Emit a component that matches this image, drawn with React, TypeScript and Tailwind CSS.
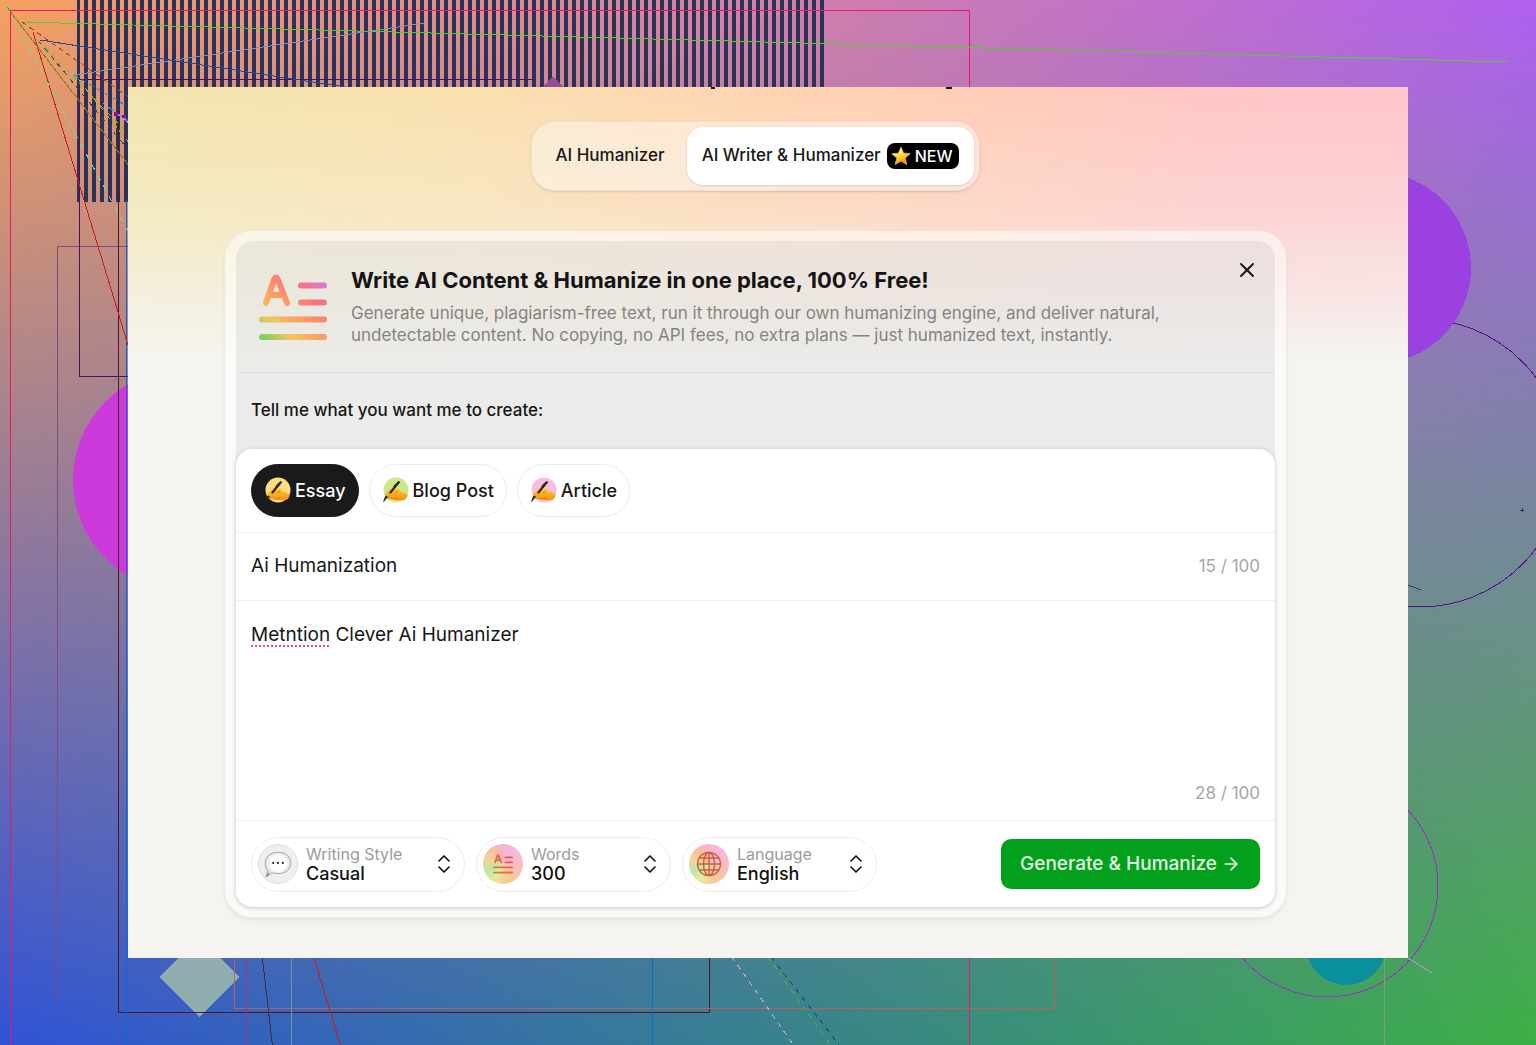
import { useId, useState } from "react";
import { ArrowRight, ChevronsUpDown, X } from "lucide-react";

const stripes = Array.from({ length: 93 }, (_, i) => 84 + i * 8);

function Backdrop() {
  return (
    <div aria-hidden="true" className="absolute inset-0 overflow-hidden">
      <div className="absolute inset-0 bg-[linear-gradient(to_right,#f5a25f,#b060f0)]" />
      <div className="absolute inset-0 bg-[linear-gradient(to_right,#3052d6,#3cb045)] [mask-image:linear-gradient(to_bottom,transparent,black)]" />
      <svg
        className="absolute inset-0 h-full w-full"
        viewBox="0 0 1536 1045"
        preserveAspectRatio="none"
        shapeRendering="crispEdges"
        fill="none"
      >
        <g fill="#2d3158">
          <rect x="77" y="0" width="3" height="202" />
          {stripes.map((x) => (
            <rect key={x} x={x} y="0" width="4" height="202" />
          ))}
        </g>
        <circle cx="184" cy="480" r="111" fill="#cd3adc" />
        <circle cx="1420" cy="463" r="144" stroke="#5c1090" />
        <circle cx="1375" cy="268" r="96" fill="#9b41e2" />
        <circle cx="1327" cy="886" r="111" stroke="#a02bc8" />
        <circle cx="1346" cy="945" r="40" fill="#0a8f9c" />
        <path d="M199 937L239 977L199 1017L159 977Z" fill="#90adb0" />
        <path d="M543 87L553 76L563 87Z" fill="#9a4a90" />
        <path d="M10.5 1045V10.5H969.5V1045" stroke="#ec1763" />
        <path d="M57.5 1000V246.5H130" stroke="#804c7c" />
        <path d="M130 376.5H79.5V79.5H533" stroke="#4b1055" />
        <path d="M118.5 110V1012.5H709.5V950" stroke="#501522" />
        <path d="M126.5 200V1045M652.5 950V1045" stroke="#0d68cb" />
        <path d="M234.5 950V1008.5H1054.5V950" stroke="#b0645f" />
        <path d="M246.5 950V1045" stroke="#9b3a6c" />
        <path d="M291.5 950V1045" stroke="#6a98a8" />
        <path d="M1384.5 950V1045" stroke="#72a582" />
        <path d="M22 22L1507 62" stroke="#54cc32" />
        <path d="M74 75L425 23" stroke="#8790b4" />
        <path d="M40 40L345 87" stroke="#24489b" />
        <path d="M33 32L348 1070" stroke="#d01818" />
        <path d="M6 6L130 167" stroke="#8b7a20" />
        <path d="M6 6L130 235" stroke="#67dfaa" strokeDasharray="6 6" />
        <path d="M22 22L130 98" stroke="#aa3544" strokeDasharray="5 4" />
        <path d="M38 40L130 152" stroke="#204b56" strokeDasharray="5 5" />
        <path d="M38 40L130 136" stroke="#71bf31" strokeDasharray="5 5" />
        <path d="M74 75L130 108" stroke="#2478d8" strokeDasharray="5 4" />
        <path d="M78 79L130 144" stroke="#aaad12" strokeDasharray="7 4" />
        <path d="M103 103L130 124" stroke="#df83e8" />
        <path d="M108 107L130 122" stroke="#22a2ef" />
        <rect x="114" y="112" width="4" height="4" fill="#940d9b" />
        <rect x="122" y="115" width="4" height="3" fill="#940d9b" />
        <path d="M262 955L273 1050" stroke="#3c3037" />
        <path d="M732 957L797 1050" stroke="#e0a5c6" strokeDasharray="5 5" />
        <path d="M768 957L834 1050" stroke="#54b635" strokeDasharray="5 5" />
        <path d="M771 957L843 1050" stroke="#184f60" strokeDasharray="5 5" />
        <path d="M1405 584L1421 590" stroke="#283e72" />
        <path d="M1408 958L1432 973" stroke="#c08be0" />
        <path d="M1520 510H1524M1522 508V512" stroke="#24402a" />
      </svg>
    </div>
  );
}

function WritingHand({ tint }: { tint: string }) {
  const id = useId();
  return (
    <svg aria-hidden="true" viewBox="0 0 27 27" className="size-[27px] shrink-0">
      <defs>
        <linearGradient id={id} x1="0" y1="0" x2="0" y2="1">
          <stop offset="0" stopColor="#ffd43a" />
          <stop offset="1" stopColor="#f3900f" />
        </linearGradient>
      </defs>
      <circle cx="14" cy="13" r="12.5" fill={tint} />
      <path
        d="M3.5 20C3 17.5 5 14.5 7.500 13C9 10.500 11 9 12.500 9.200C14 9.500 13 11.500 12 12.700C14 11.500 16 11 17.500 11.700C18.500 12.500 17.500 13.500 16 14.200C18.500 14.300 21 14.500 25.500 17.500C26 20 24 22 22.500 23C18 23.500 14 23.500 10.500 22C8 22.500 5 22 3.500 20Z"
        fill={`url(#${id})`}
      />
      <path d="M10.500 22C13 22 14.500 21.500 16 20.500M16 14.200L13.500 15.500" fill="none" stroke="#c9740f" strokeWidth="0.800" strokeLinecap="round" />
      <path d="M16.500 4.400L17.800 5.200L8.800 16.200L7.600 15.500ZM15.500 5.200L11.500 9.500" fill="#2b2423" stroke="#2b2423" strokeWidth="1" strokeLinejoin="round" />
      <path d="M5.500 19.800L1.700 24.600L2.600 21.500L3.800 19Z" fill="#2b2423" stroke="#2b2423" strokeWidth="0.800" strokeLinejoin="round" />
    </svg>
  );
}

function DocumentMark({ className, small = false }: { className: string; small?: boolean }) {
  const id = useId();
  return (
    <svg aria-hidden="true" viewBox="1 0 68 68" className={className}>
      <defs>
        <linearGradient id={id} gradientUnits="userSpaceOnUse" x1="4" y1="66" x2="62" y2="2">
          <stop offset="0" stopColor={small ? "#c08a35" : "#72d066"} />
          <stop offset="0.250" stopColor={small ? "#c98238" : "#f2c75c"} />
          <stop offset="0.500" stopColor={small ? "#dd6f42" : "#fd9b64"} />
          <stop offset="0.750" stopColor={small ? "#df5555" : "#fa7181"} />
          <stop offset="1" stopColor={small ? "#c75d77" : "#d47adf"} />
        </linearGradient>
      </defs>
      <g fill="none" stroke={`url(#${id})`} strokeWidth="6" strokeLinecap="round" strokeLinejoin="round">
        <path d="M8 29L16 6Q18 1 20 6L29 29M11 21H26" />
        <path d="M43 11.500L66 11.400M43 28.500L66 28.400M4 45.500L66 45.400M4 63L66 62.900" />
      </g>
    </svg>
  );
}

function SpeechBubble() {
  const id = useId();
  return (
    <svg aria-hidden="true" viewBox="0 0 30 30" className="size-8">
      <defs>
        <radialGradient id={id} cx="0.500" cy="0.450" r="0.600">
          <stop offset="0.500" stopColor="#ffffff" />
          <stop offset="0.850" stopColor="#dadada" />
          <stop offset="1" stopColor="#8c8c8c" />
        </radialGradient>
      </defs>
      <path d="M15 4C22 4 27 8 27 14C27 20 22 24 15 24C13 24 11 23.700 9.500 23.200C7.500 25 5.500 26.500 3.500 27C4.500 25 5.300 23 5 21C3.500 19 3 17 3 14C3 8 8 4 15 4Z" fill={`url(#${id})`} stroke="#9c9c9c" strokeWidth="0.800" />
      <g fill="#262626">
        <circle cx="10.500" cy="14" r="1" />
        <circle cx="15" cy="14" r="1" />
        <circle cx="19.500" cy="14" r="1" />
      </g>
    </svg>
  );
}

function GlobeMark() {
  return (
    <svg aria-hidden="true" viewBox="0 0 26 26" className="size-6.5" fill="none" stroke="#c8613c" strokeWidth="1.400">
      <circle cx="13" cy="13" r="11.500" />
      <ellipse cx="13" cy="13" rx="5.500" ry="11.500" />
      <path d="M13 1.500V24.500M1.500 13H24.500M3.500 7H22.500M3.500 19H22.500" />
    </svg>
  );
}

function Star() {
  const id = useId();
  return (
    <svg aria-hidden="true" viewBox="0 0 20 20" className="size-5">
      <defs>
        <linearGradient id={id} x1="0" y1="0" x2="0.400" y2="1">
          <stop offset="0.300" stopColor="#fff3a0" />
          <stop offset="0.650" stopColor="#ffcc33" />
          <stop offset="1" stopColor="#e98e0c" />
        </linearGradient>
      </defs>
      <path d="M10 1L12.600 7.200L19.200 7.700L14.200 12L15.800 18.600L10 15.100L4.200 18.600L5.800 12L0.800 7.700L7.400 7.200Z" fill={`url(#${id})`} stroke="#f4b42a" strokeWidth="0.800" strokeLinejoin="round" />
    </svg>
  );
}

const kinds = [
  { label: "Essay", tint: "#fddc83" },
  { label: "Blog Post", tint: "#cbe98b" },
  { label: "Article", tint: "#f6bddd" },
];

const rainbow =
  "bg-[conic-gradient(from_0deg,#f8b4cf,#fab5dc_12%,#fbc0b4_30%,#f8c899_45%,#e6e9a2_58%,#bde9a4_68%,#f5d29b_80%,#f8bc9c_90%,#f8b4cf)]";

function Picker({
  label,
  options,
  width,
  disc,
  children,
}: {
  label: string;
  options: string[];
  width: string;
  disc: string;
  children: React.ReactNode;
}) {
  return (
    <label className={`relative flex h-[55px] items-center gap-2 rounded-full border border-[#ececec] px-1.5 ${width}`}>
      <span className={`flex size-10 shrink-0 items-center justify-center rounded-full ${disc}`}>{children}</span>
      <span className="flex min-w-0 flex-1 flex-col">
        <span className="text-base leading-5 text-[#9c9c9c]">{label}</span>
        <select className="w-full appearance-none bg-transparent text-lg leading-5 font-medium text-[#111] outline-none">
          {options.map((o) => (
            <option key={o}>{o}</option>
          ))}
        </select>
      </span>
      <ChevronsUpDown aria-hidden="true" strokeWidth={1.75} className="pointer-events-none absolute right-2 size-6 text-[#171717]" />
    </label>
  );
}

export default function App() {
  const [kind, setKind] = useState("Essay");
  const [title, setTitle] = useState("Ai Humanization");
  return (
    <div className="relative flex min-h-screen flex-col px-32 py-[87px] font-['Inter',sans-serif] text-[#171717]">
      <Backdrop />
      <main className="relative flex flex-1 flex-col items-center overflow-hidden bg-[#f5f4f0] pr-[121px] pb-10 pl-24">
        <div
          aria-hidden="true"
          className="absolute inset-x-0 top-0 h-[270px] bg-[linear-gradient(to_right,#f2e6ae,#fadfae_28%,#fed6b0_45%,#ffcdb6_65%,#ffc5c5_85%,#ffc4cb)] [mask-image:linear-gradient(to_bottom,black,rgba(0,0,0,0.7)_45%,transparent)]"
        />
        <div aria-hidden="true" className="absolute inset-x-0 top-0 h-0.5">
          <span className="absolute left-[583px] h-0.5 w-1 bg-[#171717]" />
          <span className="absolute left-[818px] h-0.5 w-1.5 bg-[#171717]" />
        </div>

        <nav className="relative mt-[34px] flex rounded-3xl border border-black/5 bg-white/40 p-[5px] shadow-sm">
          <button type="button" className="px-[18px] text-[17px] font-medium">
            AI Humanizer
          </button>
          <button type="button" className="ml-1 flex h-[58px] items-center gap-1.5 rounded-2xl bg-white px-[15px] text-[17px] font-medium shadow-sm">
            AI Writer &amp; Humanizer
            <span className="flex h-[26px] items-center gap-1 rounded-lg bg-black px-1 pr-1.5 text-base font-medium text-white">
              <Star />
              NEW
            </span>
          </button>
        </nav>

        <section className="relative mt-[39px] w-full rounded-[28px] border border-black/5 bg-white/50 px-[11px] py-2.5 shadow-md shadow-black/5">
          <div className="-mb-4 rounded-t-[18px] bg-black/[0.06] pb-4">
            <header className="flex h-[132px] items-start border-b border-black/5 pt-[27px] pl-[23px]">
              <DocumentMark className="mt-1.5 w-[68px] shrink-0" />
              <div className="ml-6 flex-1">
                <h1 className="text-[22px] leading-6 font-bold text-[#141414]">
                  Write AI Content &amp; Humanize in one place, 100% Free!
                </h1>
                <p className="mt-2.5 max-w-[860px] text-[17px] leading-[22px] text-[#858381]">
                  Generate unique, plagiarism-free text, run it through our own humanizing engine, and deliver natural,
                  undetectable content. No copying, no API fees, no extra plans — just humanized text, instantly.
                </p>
              </div>
              <button type="button" aria-label="Close" className="mr-3 -mt-3.5 p-1">
                <X className="size-6" />
              </button>
            </header>
            <p className="flex h-[76px] items-center px-[15px] text-[17px] font-medium">Tell me what you want me to create:</p>
          </div>

          <div className="relative rounded-2xl bg-white shadow-[0_1px_4px_rgba(0,0,0,0.22)]">
            <div className="flex h-[84px] items-center gap-2.5 border-b border-[#eee] px-[15px]">
              {kinds.map((k) => (
                <button
                  key={k.label}
                  type="button"
                  onClick={() => setKind(k.label)}
                  className={`flex h-[53px] items-center gap-1 rounded-full border px-3 text-lg font-medium ${
                    kind === k.label ? "border-[#1a1a1a] bg-[#1a1a1a] text-white" : "border-[#ececec] bg-white"
                  }`}
                >
                  <WritingHand tint={k.tint} />
                  {k.label}
                </button>
              ))}
            </div>
            <div className="flex h-[68px] items-center border-b border-[#eee] px-[15px]">
              <input
                aria-label="Title"
                value={title}
                onChange={(e) => setTitle(e.target.value)}
                className="flex-1 bg-transparent text-[19px] outline-none"
              />
              <span className="text-[17px] text-[#a6a6a6]">15 / 100</span>
            </div>
            <div className="flex h-[220px] flex-col justify-between border-b border-[#eee] px-[15px] pt-5 pb-3.5">
              <div
                role="textbox"
                aria-label="Details"
                aria-multiline="true"
                contentEditable
                suppressContentEditableWarning
                spellCheck={false}
                className="text-[19px] leading-7 outline-none"
              >
                <span className="underline decoration-[#dc5c6a] decoration-dotted decoration-2 underline-offset-4">Metntion</span> Clever Ai
                Humanizer
              </div>
              <span className="self-end text-[17px] text-[#a6a6a6]">28 / 100</span>
            </div>
            <div className="flex h-[86px] items-center gap-[11px] px-[15px]">
              <Picker label="Writing Style" options={["Casual", "Formal"]} width="w-[214px]" disc="border border-[#dedede] bg-[#efefef]">
                <SpeechBubble />
              </Picker>
              <Picker label="Words" options={["300", "500"]} width="w-[195px]" disc={rainbow}>
                <DocumentMark className="w-5" small />
              </Picker>
              <Picker label="Language" options={["English", "Spanish"]} width="w-[195px]" disc={rainbow}>
                <GlobeMark />
              </Picker>
              <button
                type="button"
                className="ml-auto flex h-[50px] items-center gap-1 rounded-[10px] bg-[#03a01b] px-[19px] text-[19px] font-medium text-[#e5f8e4]"
              >
                Generate &amp; Humanize
                <ArrowRight className="size-5" />
              </button>
            </div>
          </div>
        </section>
      </main>
    </div>
  );
}
